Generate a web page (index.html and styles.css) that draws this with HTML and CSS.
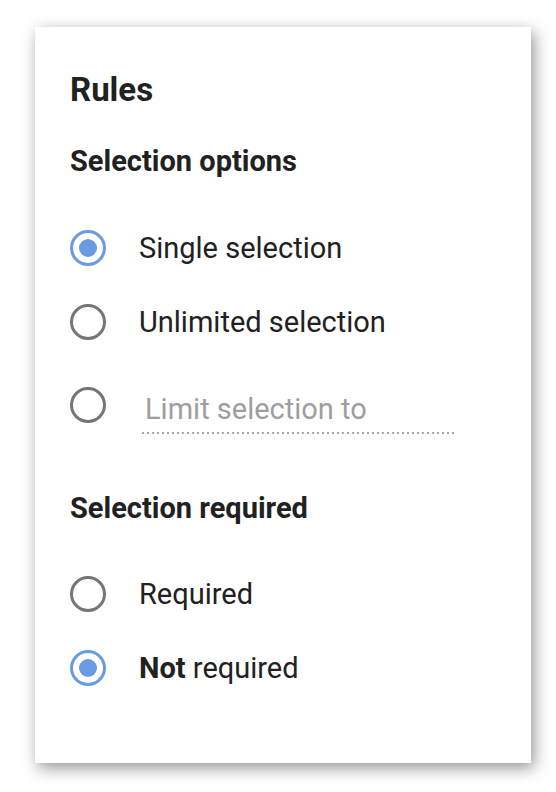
FILE: index.html
```html
<!DOCTYPE html>
<html lang="en">
<head>
<meta charset="utf-8">
<title>Rules</title>
<link rel="stylesheet" href="styles.css">
</head>
<body>
<div class="card">
  <h1 class="title">Rules</h1>
  <h2 class="section">Selection options</h2>
  <div class="options">
    <div class="row"><span class="radio checked"></span><span class="label">Single selection</span></div>
    <div class="row"><span class="radio"></span><span class="label">Unlimited selection</span></div>
    <div class="row row-limit"><span class="radio"></span><span class="limit">Limit selection to</span></div>
  </div>
  <h2 class="section section-req">Selection required</h2>
  <div class="options">
    <div class="row"><span class="radio"></span><span class="label">Required</span></div>
    <div class="row"><span class="radio checked"></span><span class="label"><b>Not</b> required</span></div>
  </div>
</div>
</body>
</html>
```

FILE: styles.css
```css
html, body {
  margin: 0;
  padding: 0;
  background: #ffffff;
}
body {
  font-family: Roboto, "Noto Sans", "Liberation Sans", sans-serif;
  color: #212121;
  width: 556px;
  height: 792px;
  overflow: hidden;
}
.card {
  margin: 27px 0 0 35px;
  width: 496px;
  height: 736px;
  box-sizing: border-box;
  padding: 43px 35px 0 35px;
  background: #ffffff;
  box-shadow: 3px 5px 15px rgba(0, 0, 0, 0.42);
}
.title {
  margin: 0;
  font-size: 33px;
  line-height: 40px;
  font-weight: 700;
}
.section {
  margin: 33px 0 0 0;
  font-size: 29px;
  line-height: 36px;
  font-weight: 700;
}
.section-req {
  margin-top: 39px;
}
.options {
  margin-top: 32px;
  display: flex;
  flex-direction: column;
}
.section-req + .options {
  margin-top: 31px;
}
.row {
  height: 74px;
  display: flex;
  align-items: center;
}
.row-limit {
  height: 92px;
}
.radio {
  width: 36px;
  height: 36px;
  box-sizing: border-box;
  border: 3px solid #757575;
  border-radius: 50%;
  display: flex;
  align-items: center;
  justify-content: center;
  flex: none;
}
.radio.checked {
  border-color: #6a9be2;
}
.radio.checked::after {
  content: "";
  width: 18px;
  height: 18px;
  border-radius: 50%;
  background: #6a9be2;
}
.label {
  margin-left: 33px;
  font-size: 29px;
  line-height: 34px;
}
.label b {
  font-weight: 700;
}
.limit {
  margin-left: 36px;
  width: 312px;
  box-sizing: border-box;
  padding: 16px 0 8px 3px;
  font-size: 29px;
  line-height: 34px;
  color: #9e9e9e;
  background-image: linear-gradient(to right, #a8a8a8 40%, rgba(255, 255, 255, 0) 40%);
  background-size: 5px 2px;
  background-position: left bottom;
  background-repeat: repeat-x;
}
```
